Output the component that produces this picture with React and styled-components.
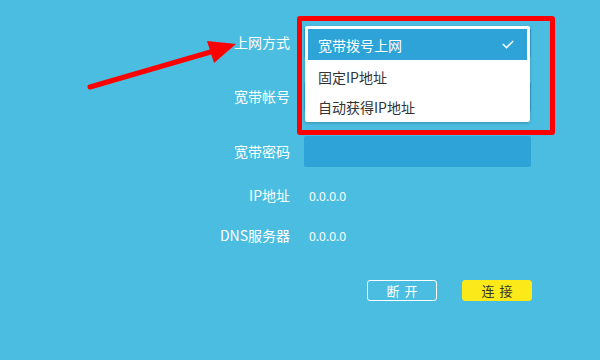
import React from "react";
import styled, { createGlobalStyle } from "styled-components";

const Global = createGlobalStyle`
  html, body { margin: 0; padding: 0; }
  body {
    width: 600px; height: 360px; overflow: hidden;
    background: #4bbde0;
    font-family: "Noto Sans CJK SC", "Noto Sans", sans-serif;
  }
`;

const Page = styled.div`
  position: relative;
  width: 600px;
  height: 360px;
  background: #4bbde0;
`;

const Form = styled.div`
  display: flex;
  flex-direction: column;
  padding-top: 28px;
`;

const Row = styled.div`
  display: flex;
  align-items: center;
  gap: 15px;
  height: ${(p) => p.$h || 30}px;
  margin-top: ${(p) => p.$mt || 0}px;
`;

const Label = styled.div`
  width: 290px;
  text-align: right;
  color: #fff;
  font-size: 14px;
  line-height: 1;
  margin-top: -2px;
`;

const Field = styled.div`
  position: relative;
  width: 227px;
  height: 100%;
  display: flex;
  align-items: center;
  margin-left: -1px;
`;

const Input = styled.div`
  width: 227px;
  height: 100%;
  background: #2ea3d8;
  border-radius: 2px;
`;

const Value = styled.div`
  color: #fff;
  font-size: 12px;
  padding-left: 5px;
  font-family: "Noto Sans", sans-serif;
`;

const Menu = styled.div`
  position: absolute;
  left: 1px;
  top: -2px;
  width: 219px;
  padding: 3px 3px 0;
  background: #fff;
  border-radius: 2px;
  box-shadow: 0 1px 3px rgba(0, 0, 0, 0.25);
  z-index: 2;
`;

const Item = styled.div`
  display: flex;
  align-items: center;
  justify-content: space-between;
  height: ${(p) => (p.$selected ? 31 : 30)}px;
  margin-bottom: ${(p) => (p.$selected ? 2 : 0)}px;
  padding: 0 13px 0 10px;
  font-size: 14px;
  color: ${(p) => (p.$selected ? "#fff" : "#333")};
  background: ${(p) => (p.$selected ? "#2ea3d8" : "transparent")};
`;

const Buttons = styled.div`
  display: flex;
  gap: 25px;
  margin-top: 29px;
  padding-left: 367px;
`;

const Button = styled.div`
  box-sizing: border-box;
  width: 70px;
  height: 21px;
  display: flex;
  align-items: center;
  justify-content: center;
  border-radius: 3px;
  font-size: 13px;
  letter-spacing: 5px;
  text-indent: 5px;
  border: 1px solid ${(p) => (p.$primary ? "#fbe91a" : "#fff")};
  background: ${(p) => (p.$primary ? "#fbe91a" : "transparent")};
  color: ${(p) => (p.$primary ? "#333" : "#fff")};
`;

const RedBox = styled.div`
  position: absolute;
  left: 297px;
  top: 16px;
  width: 258px;
  height: 119px;
  box-sizing: border-box;
  border: 5px solid #ff0000;
  border-radius: 3px;
  z-index: 3;
  pointer-events: none;
`;

const Arrow = styled.svg`
  position: absolute;
  left: 0;
  top: 0;
  z-index: 3;
`;

export default function App() {
  return (
    <Page>
      <Global />
      <Form>
        <Row>
          <Label>上网方式</Label>
          <Field>
            <Input />
            <Menu>
              <Item $selected>
                <span>宽带拨号上网</span>
                <svg width="12" height="9" viewBox="0 0 12 9">
                  <path d="M0.8 4 L4.5 7.6 L11.2 1" fill="none" stroke="#fff" strokeWidth="1.5" />
                </svg>
              </Item>
              <Item>固定IP地址</Item>
              <Item>自动获得IP地址</Item>
            </Menu>
          </Field>
        </Row>
        <Row $mt={24}>
          <Label>宽带帐号</Label>
          <Field>
            <Input />
          </Field>
        </Row>
        <Row $mt={24} $h={31}>
          <Label>宽带密码</Label>
          <Field>
            <Input />
          </Field>
        </Row>
        <Row $mt={14}>
          <Label>IP地址</Label>
          <Field>
            <Value>0.0.0.0</Value>
          </Field>
        </Row>
        <Row $mt={10}>
          <Label>DNS服务器</Label>
          <Field>
            <Value>0.0.0.0</Value>
          </Field>
        </Row>
        <Buttons>
          <Button>断开</Button>
          <Button $primary>连接</Button>
        </Buttons>
      </Form>
      <RedBox />
      <Arrow width="600" height="360" viewBox="0 0 600 360">
        <line x1="90" y1="87" x2="214" y2="51" stroke="#ff0000" strokeWidth="5" strokeLinecap="round" />
        <polygon points="236,44 207,41 214,63" fill="#ff0000" />
      </Arrow>
    </Page>
  );
}
